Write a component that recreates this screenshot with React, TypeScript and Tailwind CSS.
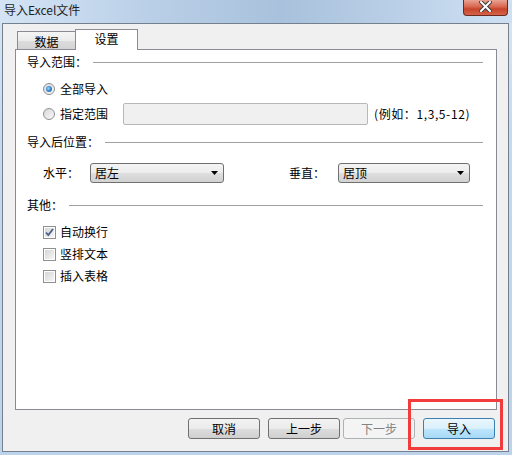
import React from "react";

type Children = { children: React.ReactNode };

// section title with the etched line running to the right
const Group = ({ children }: Children) => (
  <div className="flex h-[18px] items-center pl-[11px] pr-[13px]">
    <span className="leading-[18px]">{children}</span>
    <div className="ml-[6px] h-px flex-1 bg-[#a0a0a0]" />
  </div>
);

const Radio = ({ checked }: { checked?: boolean }) => (
  <div className="flex h-[12px] w-[12px] items-center justify-center rounded-full border border-[#8e8f8f] bg-[linear-gradient(135deg,#d8d8d8,#f8f8f8)]">
    {checked && (
      <div className="h-[6px] w-[6px] rounded-full bg-[radial-gradient(circle_at_40%_40%,#9fd3f7_0%,#3d8ed3_45%,#174f86_100%)]" />
    )}
  </div>
);

const Check = ({ checked }: { checked?: boolean }) => (
  <div className="flex h-[13px] w-[13px] items-center justify-center border border-[#8e8f8f] bg-white p-px">
    <div className="relative h-full w-full bg-[linear-gradient(135deg,#d5d5d5,#f6f6f6)]">
      {checked && (
        <svg className="absolute left-[0px] top-[0px]" width="9" height="9" viewBox="0 0 9 9">
          <path d="M1 4.5 L3.3 7 L8 1" fill="none" stroke="#4a5f8c" strokeWidth="1.8" />
        </svg>
      )}
    </div>
  </div>
);

const Select = ({ value, width }: { value: string; width: string }) => (
  <div
    className={`${width} flex h-[20px] items-center justify-between rounded-[3px] border border-[#707070] bg-[linear-gradient(to_bottom,#f4f4f4_0%,#ececec_50%,#dedede_51%,#d2d2d2_100%)] pl-[4px] pr-[5px]`}
  >
    <span className="leading-[16px]">{value}</span>
    <svg width="7" height="4" viewBox="0 0 7 4">
      <polygon points="0,0 7,0 3.5,4" fill="#000" />
    </svg>
  </div>
);

const Button = ({ children, kind }: Children & { kind?: "disabled" | "default" }) => {
  const look =
    kind === "disabled"
      ? "border-[#adb2b5] bg-[#f4f4f4] text-[#838383]"
      : kind === "default"
      ? "border-[#3c7fb1] bg-[linear-gradient(to_bottom,#eaf6fd_0%,#d9f0fc_50%,#bee6fd_51%,#a7d9f5_100%)]"
      : "border-[#707070] bg-[linear-gradient(to_bottom,#f2f2f2_0%,#ebebeb_50%,#dddddd_51%,#cfcfcf_100%)]";
  return (
    <div className={`flex h-[21px] w-[72px] items-center justify-center rounded-[3px] border ${look}`}>
      <span className="leading-[16px]">{children}</span>
    </div>
  );
};

const App = () => {
  return (
    <div className="relative flex h-[455px] w-[512px] flex-col overflow-hidden bg-[linear-gradient(to_bottom,#d9e7f6_0%,#c5d9ef_30%,#bcd3eb_100%)] font-['Noto_Sans_CJK_SC',sans-serif] text-[12px] text-black">
      {/* TITLE BAR */}
      <div className="flex h-[23px] items-start justify-between bg-[linear-gradient(to_right,#d4e4f5_0%,#b9cfe7_30%,#a9c1dc_55%,#b8cee6_75%,#cfe0f3_100%)]">
        <span className="ml-[4px] mt-[2px] leading-[16px] text-[#1e1e1e]">导入Excel文件</span>
        <div className="mr-[4px] flex h-[16px] w-[45px] items-center justify-center rounded-b-[4px] border border-t-0 border-[#6b2a20] bg-[linear-gradient(to_bottom,#e9a393_0%,#d8664f_45%,#c7442c_60%,#d4634a_100%)]">
          <svg width="13" height="11" viewBox="0 0 13 11" className="mb-[3px]">
            <path d="M2 1 L11 10 M11 1 L2 10" stroke="#3b3b3b" strokeWidth="4" strokeLinecap="square" />
            <path d="M2 1 L11 10 M11 1 L2 10" stroke="#ffffff" strokeWidth="2" strokeLinecap="square" />
          </svg>
        </div>
      </div>

      {/* CLIENT AREA */}
      <div className="mb-[3px] ml-[2px] mr-[3px] flex flex-1 flex-col border border-[#75808e] bg-[#f0f0f0] pl-[12px] pr-[11px] pt-[5px]">
        {/* TABS */}
        <div className="flex h-[21px] items-end">
          <div className="mb-px ml-[2px] flex h-[18px] w-[58px] items-center justify-center border-l border-t border-[#898c95] bg-[linear-gradient(to_bottom,#f5f5f5_0%,#ebebeb_50%,#dddddd_51%,#d4d4d4_100%)] pt-[2px]">
            <span className="leading-[14px]">数据</span>
          </div>
          <div className="relative z-10 flex h-[21px] w-[63px] items-center justify-center border-x border-t border-[#898c95] bg-white pb-[3px]">
            <span className="leading-[14px]">设置</span>
          </div>
        </div>

        {/* PANEL */}
        <div className="-mt-px flex h-[361px] w-[482px] flex-col border border-[#898c95] bg-white pt-[3px]">
          <Group>导入范围：</Group>

          <div className="mt-[8px] flex h-[20px] items-center pl-[27px]">
            <Radio checked />
            <span className="ml-[5px] leading-[16px]">全部导入</span>
          </div>

          <div className="mt-[4px] flex h-[22px] items-center pl-[27px]">
            <Radio />
            <span className="ml-[5px] leading-[16px]">指定范围</span>
            <div className="ml-[15px] h-[22px] w-[245px] rounded-[2px] border border-[#b8b8b8] bg-[#f0f0f0]" />
            <span className="ml-[6px] leading-[16px] tracking-[0.6px]">(例如：1,3,5-12)</span>
          </div>

          <div className="mt-[8px]">
            <Group>导入后位置：</Group>
          </div>

          <div className="mt-[12px] flex h-[20px] items-center pl-[27px]">
            <span className="w-[47px] leading-[16px]">水平：</span>
            <Select value="居左" width="w-[134px]" />
            <span className="ml-[65px] w-[49px] leading-[16px]">垂直：</span>
            <Select value="居顶" width="w-[132px]" />
          </div>

          <div className="mt-[13px]">
            <Group>其他：</Group>
          </div>

          <div className="mt-[7px] flex flex-col pl-[27px]">
            {[
              { label: "自动换行", checked: true },
              { label: "竖排文本", checked: false },
              { label: "插入表格", checked: false },
            ].map((item) => (
              <div key={item.label} className="flex h-[22px] items-center">
                <Check checked={item.checked} />
                <span className="ml-[4px] leading-[16px]">{item.label}</span>
              </div>
            ))}
          </div>
        </div>

        {/* BUTTONS */}
        <div className="mt-[8px] flex w-[482px] justify-end pr-[2px]">
          <Button>取消</Button>
          <div className="ml-[8px]">
            <Button>上一步</Button>
          </div>
          <div className="ml-[3px]">
            <Button kind="disabled">下一步</Button>
          </div>
          <div className="ml-[8px]">
            <Button kind="default">导入</Button>
          </div>
        </div>
      </div>

      {/* annotation box over the import button */}
      <div className="absolute left-[408px] top-[399px] h-[51px] w-[95px] border-[3px] border-[#f23b3b]" />
    </div>
  );
};

export default App;
